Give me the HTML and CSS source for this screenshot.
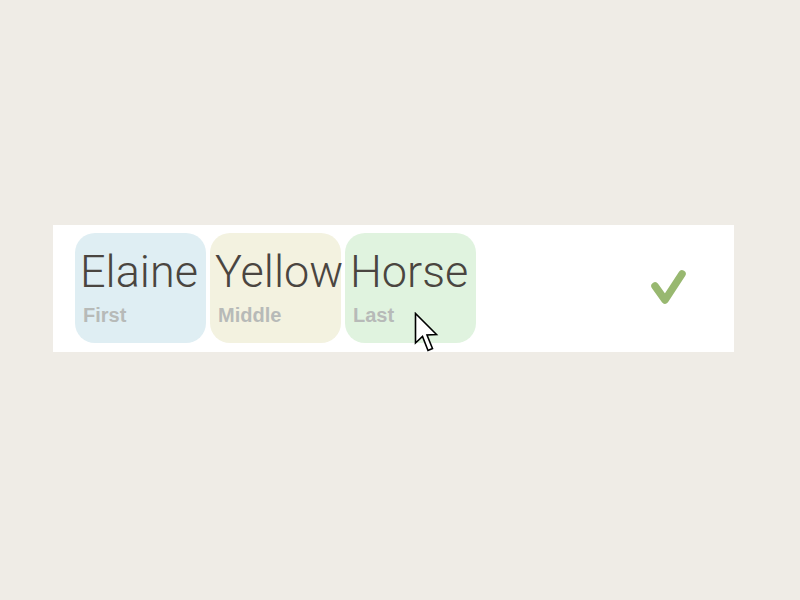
FILE: index.html
```html
<!DOCTYPE html>
<html>
<head>
<meta charset="utf-8">
<link rel="stylesheet" href="styles.css">
</head>
<body>
<div class="stage">
  <div class="panel">
    <div class="tiles">
      <div class="tile tile-first">
        <div class="name">Elaine</div>
        <div class="label">First</div>
      </div>
      <div class="tile tile-middle">
        <div class="name">Yellow</div>
        <div class="label">Middle</div>
      </div>
      <div class="tile tile-last">
        <div class="name">Horse</div>
        <div class="label">Last</div>
      </div>
    </div>
    <svg class="check" width="38" height="38" viewBox="0 0 38 38">
      <path d="M5 17 L15 31 L32 5" fill="none" stroke="#98b870" stroke-width="7.5" stroke-linecap="round" stroke-linejoin="round"/>
    </svg>
    <svg class="cursor" width="26" height="42" viewBox="0 0 26 42">
      <path d="M1.5 1.5 L1.5 31 L8.5 24.5 L14 38.5 L18.5 36.5 L13 23 L22.5 22.5 Z" fill="#fff" stroke="#000" stroke-width="1.6" stroke-linejoin="miter"/>
    </svg>
  </div>
</div>
</body>
</html>
```

FILE: styles.css
```css
html, body {
  margin: 0;
  padding: 0;
}
body {
  background: #efece6;
  width: 800px;
  height: 600px;
}
.stage {
  padding-top: 225px;
  padding-left: 53px;
}
.panel {
  position: relative;
  width: 681px;
  height: 127px;
  box-sizing: border-box;
  background: #ffffff;
  padding: 8px 46px 0 22px;
  display: flex;
  align-items: flex-start;
}
.tiles {
  display: flex;
  gap: 4px;
}
.tile {
  width: 131px;
  height: 110px;
  box-sizing: border-box;
  border-radius: 20px;
  padding: 16px 0 0 5px;
}
.tile-first { background: #dfeef3; }
.tile-middle { background: #f3f2e0; }
.tile-last { background: #e0f3df; }
.name {
  font-family: Roboto, "Liberation Sans", sans-serif;
  font-weight: 300;
  font-size: 45px;
  line-height: 45px;
  color: #4a4540;
  white-space: nowrap;
}
.label {
  margin-top: 11px;
  padding-left: 3px;
  font-family: "Liberation Sans", Arial, sans-serif;
  font-weight: bold;
  font-size: 20px;
  line-height: 20px;
  color: #b7bab8;
}
.check {
  margin-left: auto;
  margin-top: 36px;
}
.cursor {
  position: absolute;
  left: 361px;
  top: 87px;
}
```
